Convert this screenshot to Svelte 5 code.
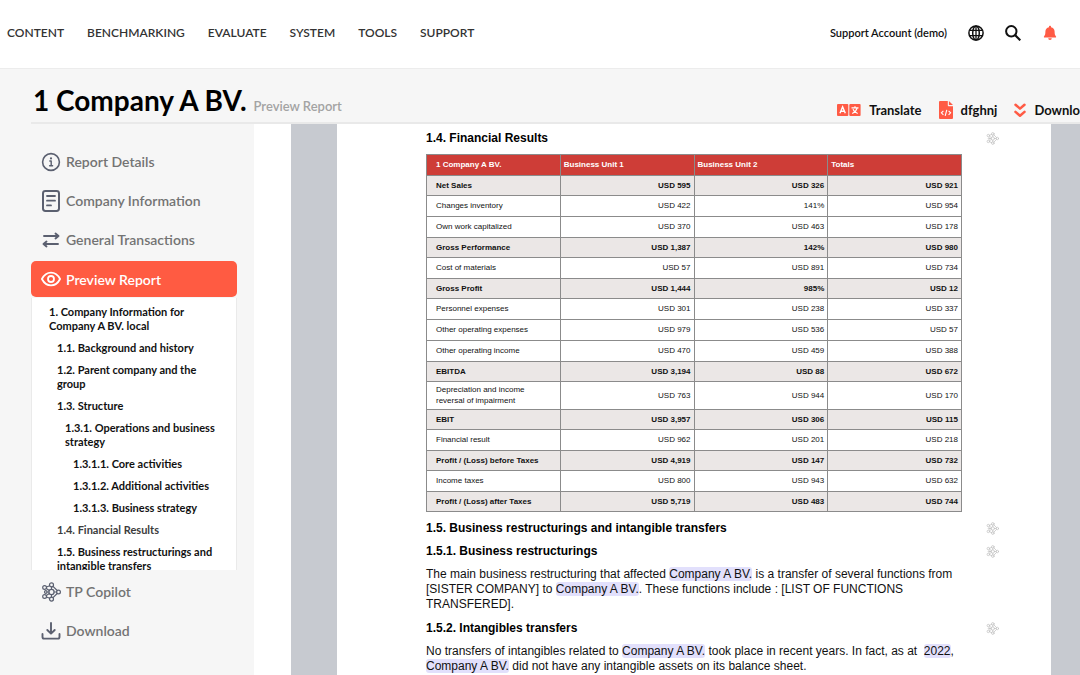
<script>
  const menu = ['Content', 'Benchmarking', 'Evaluate', 'System', 'Tools', 'Support'];

  const steps = [
    { icon: 'info', label: 'Report Details' },
    { icon: 'form', label: 'Company Information' },
    { icon: 'swap', label: 'General Transactions' },
    { icon: 'eye', label: 'Preview Report', active: true }
  ];

  const extras = [
    { icon: 'copilot', label: 'TP Copilot' },
    { icon: 'download', label: 'Download' }
  ];

  const toc = [
    { level: 1, text: '1. Company Information for Company A BV. local' },
    { level: 2, text: '1.1. Background and history' },
    { level: 2, text: '1.2. Parent company and the group' },
    { level: 2, text: '1.3. Structure' },
    { level: 3, text: '1.3.1. Operations and business strategy' },
    { level: 4, text: '1.3.1.1. Core activities' },
    { level: 4, text: '1.3.1.2. Additional activities' },
    { level: 4, text: '1.3.1.3. Business strategy' },
    { level: 2, text: '1.4. Financial Results', current: true },
    { level: 2, text: '1.5. Business restructurings and intangible transfers' }
  ];

  const columns = ['1 Company A BV.', 'Business Unit 1', 'Business Unit 2', 'Totals'];

  const rows = [
    { name: 'Net Sales', values: ['USD 595', 'USD 326', 'USD 921'], total: true },
    { name: 'Changes inventory', values: ['USD 422', '141%', 'USD 954'] },
    { name: 'Own work capitalized', values: ['USD 370', 'USD 463', 'USD 178'] },
    { name: 'Gross Performance', values: ['USD 1,387', '142%', 'USD 980'], total: true },
    { name: 'Cost of materials', values: ['USD 57', 'USD 891', 'USD 734'] },
    { name: 'Gross Profit', values: ['USD 1,444', '985%', 'USD 12'], total: true },
    { name: 'Personnel expenses', values: ['USD 301', 'USD 238', 'USD 337'] },
    { name: 'Other operating expenses', values: ['USD 979', 'USD 536', 'USD 57'] },
    { name: 'Other operating income', values: ['USD 470', 'USD 459', 'USD 388'] },
    { name: 'EBITDA', values: ['USD 3,194', 'USD 88', 'USD 672'], total: true },
    { name: 'Depreciation and income reversal of impairment', values: ['USD 763', 'USD 944', 'USD 170'], tall: true },
    { name: 'EBIT', values: ['USD 3,957', 'USD 306', 'USD 115'], total: true },
    { name: 'Financial result', values: ['USD 962', 'USD 201', 'USD 218'] },
    { name: 'Profit / (Loss) before Taxes', values: ['USD 4,919', 'USD 147', 'USD 732'], total: true },
    { name: 'Income taxes', values: ['USD 800', 'USD 943', 'USD 632'] },
    { name: 'Profit / (Loss) after Taxes', values: ['USD 5,719', 'USD 483', 'USD 744'], total: true }
  ];
</script>

{#snippet icon(name)}
  {#if name === 'info'}
    <svg class="icon" viewBox="0 0 20 20">
      <circle cx="10" cy="10" r="8.4" />
      <path d="M8.800 9h1.400v4.600M8.600 13.700h3" stroke-width="1.4" />
      <circle cx="10" cy="6.4" r="1.100" class="solid" />
    </svg>
  {:else if name === 'form'}
    <svg class="icon tall" viewBox="0 0 20 24">
      <rect x="2" y="2" width="16" height="20" rx="2.4" stroke-width="2" />
      <path d="M6 7h8M6 11.7h8M6 16.4h4" stroke-width="1.8" />
    </svg>
  {:else if name === 'swap'}
    <svg class="icon" viewBox="0 0 20 20">
      <path d="M3 6h14.500M14.500 3.500l3 2.500-3 2.500M17 14H2.500M5.500 11.500l-3 2.500 3 2.500" stroke-width="1.9" />
    </svg>
  {:else if name === 'eye'}
    <svg class="icon" viewBox="0 0 20 20">
      <path d="M.9 10C3 6 6.200 3.600 10 3.600S17 6 19.100 10C17 14 13.800 16.400 10 16.400S3 14 .9 10z" stroke-width="1.8" />
      <circle cx="10" cy="10" r="3" stroke-width="1.8" />
    </svg>
  {:else if name === 'copilot'}
    <svg class="icon" viewBox="0 0 20 20">
      <g stroke-width="1.2">
        <circle cx="10.500" cy="10" r="2.600" />
        <circle cx="10.500" cy="2.900" r="2" />
        <circle cx="10.500" cy="17.100" r="2" />
        <circle cx="3.600" cy="5.500" r="1.900" />
        <circle cx="3.600" cy="14.500" r="1.900" />
        <circle cx="17.500" cy="10" r="1.900" />
        <circle cx="4.800" cy="10" r="1.300" />
        <path d="M10.500 4.900v2.500M10.500 12.600v2.500M5.300 6.500l3 2M5.300 13.500l3-2M13.100 10h2.500M6.100 10h1.800M5.500 5l3.200-1.300M5.500 15l3.200 1.300M12 4.300l4.200 4.200M12 15.700l4.200-4.200" />
      </g>
    </svg>
  {:else if name === 'download'}
    <svg class="icon" viewBox="0 0 20 20">
      <path d="M10 2v10.500M6.300 9l3.700 3.700L13.700 9" stroke-width="1.900" />
      <path d="M1.500 13v3a1.600 1.600 0 0 0 1.600 1.600h13.800a1.600 1.600 0 0 0 1.600-1.600v-3" stroke-width="1.900" />
    </svg>
  {/if}
{/snippet}

{#snippet ask()}
  <button class="ask" aria-label="Ask TP Copilot">{@render icon('copilot')}</button>
{/snippet}

<div class="app">
  <header class="topbar">
    <nav class="menu">
      {#each menu as item}
        <a href="#{item.toLowerCase()}">{item}</a>
      {/each}
    </nav>
    <div class="account">
      <a href="#account">Support Account (demo)</a>
      <button aria-label="Language">
        <svg width="16" height="16" viewBox="0 0 16 16" fill="none" stroke="#111" stroke-width="1.500">
          <circle cx="8" cy="8" r="7.100" />
          <ellipse cx="8" cy="8" rx="3.300" ry="7.100" />
          <path d="M8 1v14M1.800 5.300h12.400M1.800 10.700h12.400" stroke-width="1.300" />
        </svg>
      </button>
      <button aria-label="Search">
        <svg width="16" height="16" viewBox="0 0 16 16" fill="none" stroke="#111" stroke-width="2">
          <circle cx="6.300" cy="6.300" r="5.200" />
          <path d="M9.900 9.900l5.400 5.400" stroke-width="2.200" />
        </svg>
      </button>
      <button aria-label="Notifications">
        <svg width="16" height="16" viewBox="0 0 16 16" fill="#ff5b45">
          <path d="M8 .8c.6 0 1 .4 1 1v.4c2.200.5 3.600 2.200 3.600 4.400 0 2.900.5 3.900 1.400 4.900.3.400.1 1.100-.5 1.100H2.500c-.6 0-.8-.7-.5-1.100.9-1 1.400-2 1.400-4.900C3.400 4.400 4.800 2.700 7 2.200v-.4c0-.6.4-1 1-1z" />
          <path d="M6.200 13.300h3.600a1.800 1.800 0 0 1-3.600 0z" />
        </svg>
      </button>
    </div>
  </header>

  <div class="titlebar">
    <h1>1 Company A BV. <small>Preview Report</small></h1>
    <div class="tools">
      <button>
        <svg width="24" height="12" viewBox="0 0 24 12">
          <rect x="0" y="0" width="11.300" height="12" rx="1" fill="#ff5b45" />
          <rect x="12.300" y="0" width="11.300" height="12" rx="1" fill="#ff5b45" />
          <path d="M3 9.300L5.600 2.800 8.300 9.300M4 7.300h3.300" fill="none" stroke="#fff" stroke-width="1.400" />
          <path d="M14.500 3.900h7M18 2.200v1.700M20 4.300c-.7 2.400-2.400 4.200-4.800 5.200M16 5.200c.8 2 2.400 3.500 4.700 4.300" fill="none" stroke="#fff" stroke-width="1.200" />
        </svg>
        Translate
      </button>
      <button>
        <svg width="14" height="18" viewBox="0 0 14 18">
          <path d="M1 0h7.800v4.200c0 .6.400 1 1 1H14V17a1 1 0 0 1-1 1H1a1 1 0 0 1-1-1V1a1 1 0 0 1 1-1zM9.900 0L14 4.100H9.900z" fill="#ff5b45" />
          <path d="M4.400 9.800L2.400 11.800l2 2M9.600 9.800l2 2-2 2M7.800 8.800l-1.600 6" fill="none" stroke="#fff" stroke-width="1.100" />
        </svg>
        dfghnj
      </button>
      <button>
        <svg width="12" height="15" viewBox="0 0 12 15" fill="none" stroke="#ff5b45" stroke-width="2.500" stroke-linecap="round" stroke-linejoin="round">
          <path d="M1.500 1.700L6 5.600l4.500-3.900M1.500 8.900L6 12.800l4.500-3.900" />
        </svg>
        Download
      </button>
    </div>
  </div>

  <div class="body">
    <aside class="sidebar">
      {#each steps as step}
        <a class="step" class:active={step.active} href="#{step.icon}">
          {@render icon(step.icon)}
          {step.label}
        </a>
      {/each}
      <div class="toc">
        {#each toc as entry}
          <a class="level-{entry.level}" class:current={entry.current} href="#toc">{entry.text}</a>
        {/each}
      </div>
      {#each extras as step}
        <a class="step" href="#{step.icon}">
          {@render icon(step.icon)}
          {step.label}
        </a>
      {/each}
    </aside>

    <main class="viewer">
      <article class="paper">
        <h2>1.4. Financial Results {@render ask()}</h2>
        <table>
          <thead>
            <tr>
              {#each columns as column}
                <th>{column}</th>
              {/each}
            </tr>
          </thead>
          <tbody>
            {#each rows as row}
              <tr class:total={row.total} class:tall={row.tall}>
                <td>{row.name}</td>
                {#each row.values as value}
                  <td>{value}</td>
                {/each}
              </tr>
            {/each}
          </tbody>
        </table>
        <h2>1.5. Business restructurings and intangible transfers {@render ask()}</h2>
        <h2>1.5.1. Business restructurings {@render ask()}</h2>
        <p>
          The main business restructuring that affected <mark>Company A BV.</mark> is a transfer of several functions from
          [SISTER COMPANY] to <mark>Company A BV.</mark>. These functions include : [LIST OF FUNCTIONS TRANSFERED].
        </p>
        <h2>1.5.2. Intangibles transfers {@render ask()}</h2>
        <p>
          No transfers of intangibles related to <mark>Company A BV.</mark> took place in recent years. In fact, as at
          &nbsp;<mark>2022</mark>, <mark>Company A BV.</mark> did not have any intangible assets on its balance sheet.
        </p>
      </article>
    </main>
  </div>
</div>

<style>
  :global(body) {
    margin: 0;
    background: #f6f6f6;
  }

  .app {
    display: flex;
    flex-direction: column;
    height: 100vh;
    overflow: hidden;
    font-family: Lato, "Liberation Sans", sans-serif;
    color: #111;
  }

  a {
    color: inherit;
    text-decoration: none;
  }

  button {
    display: flex;
    align-items: center;
    padding: 0;
    border: none;
    background: none;
    font: inherit;
    color: inherit;
    cursor: pointer;
  }

  .topbar {
    display: flex;
    box-sizing: border-box;
    flex-shrink: 0;
    align-items: center;
    justify-content: space-between;
    height: 69px;
    padding: 0 22px 3px 7px;
    border-bottom: 1px solid #ececec;
    background: #fff;
  }

  .menu {
    display: flex;
    gap: 23px;
    font-size: 12px;
    font-weight: 600;
    text-transform: uppercase;
    color: #333;
  }

  .account {
    display: flex;
    align-items: center;
    gap: 21px;
    font-size: 11px;
    font-weight: 600;
  }

  .titlebar {
    display: flex;
    flex-shrink: 0;
    align-items: flex-end;
    justify-content: space-between;
    height: 53px;
    margin-left: 31px;
    border-bottom: 2px solid #e9e9e9;
    overflow: hidden;
    white-space: nowrap;
  }

  h1 {
    margin: 0 0 0 2px;
    font-size: 28px;
    line-height: 32px;
    font-weight: 700;
    color: #000;
  }

  h1 small {
    font-size: 13px;
    font-weight: 600;
    color: #a3a3a3;
  }

  .tools {
    display: flex;
    gap: 17px;
    margin: 0 -14px 3px 0;
    font-size: 13px;
    line-height: 18px;
    font-weight: 700;
  }

  .tools button {
    gap: 8px;
  }

  .body {
    display: flex;
    flex: 1;
    min-height: 0;
  }

  .sidebar {
    box-sizing: border-box;
    flex: 0 0 254px;
    padding: 20px 17px 0 31px;
  }

  .step {
    display: flex;
    align-items: center;
    gap: 5px;
    height: 35px;
    margin-bottom: 4px;
    padding-left: 10px;
    border-radius: 5px;
    font-size: 14px;
    font-weight: 600;
    color: #737373;
  }

  .step.active {
    height: 36px;
    margin-bottom: 1px;
    background: #ff5b42;
    color: #fff;
  }

  .icon {
    width: 20px;
    height: 20px;
    fill: none;
    stroke: #5b6070;
    stroke-width: 1.6;
    stroke-linecap: round;
    stroke-linejoin: round;
  }

  .icon.tall {
    height: 24px;
  }

  .icon .solid {
    fill: #5b6070;
    stroke: none;
  }

  .active .icon {
    stroke: #fff;
  }

  .toc {
    height: 272px;
    box-sizing: border-box;
    margin-bottom: 4px;
    padding: 7px 17px 0;
    border: solid #eaeaea;
    border-width: 0 1px;
    background: #fff;
    overflow: hidden;
    font-size: 11px;
    line-height: 14px;
    font-weight: 700;
  }

  .toc a {
    display: block;
    margin-bottom: 8px;
  }

  .toc .level-2 {
    margin-left: 8px;
  }

  .toc .level-3 {
    margin-left: 16px;
  }

  .toc .level-4 {
    margin-left: 24px;
  }

  .toc .current {
    color: #3c3c3c;
  }

  .viewer {
    flex: 1;
    display: flex;
    padding: 0 29px 0 46px;
    border-left: 37px solid #fff;
    background: #c7cad0;
  }

  .paper {
    flex: 1;
    padding: 6px 89px 0;
    background: #fff;
    font-family: "Liberation Sans", Arial, sans-serif;
    font-size: 12px;
    line-height: 15px;
  }

  h2 {
    display: flex;
    align-items: center;
    justify-content: space-between;
    margin: 0 -37px 7px 0;
    font-size: 12px;
    line-height: 16px;
    font-weight: 700;
    color: #000;
  }

  .ask .icon {
    width: 13px;
    height: 13px;
    stroke: #c4c4c4;
  }

  p {
    margin: 8px 0;
  }

  mark {
    border-radius: 3px;
    background: #e2e0fc;
    color: inherit;
  }

  table {
    width: 100%;
    margin: 8px 0;
    border-collapse: collapse;
    table-layout: fixed;
    font-size: 8px;
    line-height: 20px;
  }

  th,
  td {
    padding: 0 3px;
    border: 1px solid #8b8b8b;
    text-align: right;
  }

  th {
    background: #ce3d37;
    text-align: left;
    color: #fff;
  }

  th:first-child,
  td:first-child {
    padding-left: 9px;
    text-align: left;
  }

  .total {
    background: #ebe7e6;
    line-height: 19px;
    font-weight: 700;
  }

  .tall td {
    padding-top: 2px;
    padding-bottom: 3px;
    line-height: 11px;
  }

  .tall td:first-child {
    padding-right: 24px;
  }
</style>
